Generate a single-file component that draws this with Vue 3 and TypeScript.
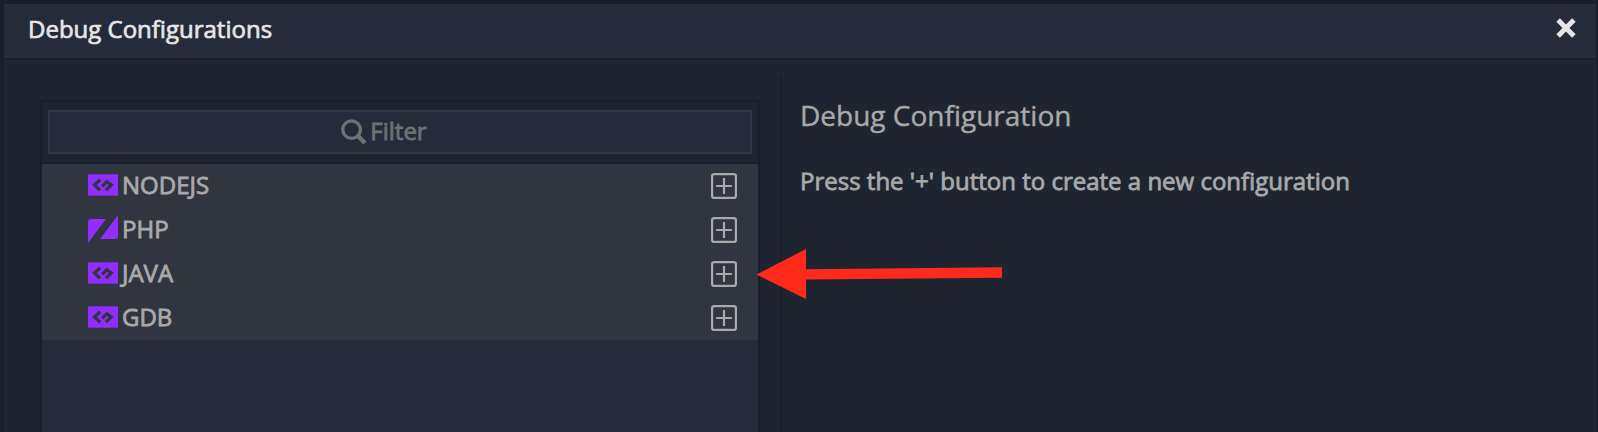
<script setup lang="ts">
interface DebugType { name: string; icon: 'code' | 'php' }

const debugTypes: DebugType[] = [
  { name: 'NODEJS', icon: 'code' },
  { name: 'PHP', icon: 'php' },
  { name: 'JAVA', icon: 'code' },
  { name: 'GDB', icon: 'code' },
]
</script>

<template>
  <div class="dialog">
    <header class="header">
      <span class="title">Debug Configurations</span>
      <svg class="close" width="20" height="20" viewBox="0 0 20 20">
        <path d="M2.1 2.1 17.9 17.9M17.9 2.1 2.1 17.9" stroke="#e6e6e6" stroke-width="5" />
      </svg>
    </header>
    <main class="content">
      <section class="types">
        <div class="filter-bar">
          <div class="filter">
            <svg width="26" height="26" viewBox="0 0 26 26" fill="none" stroke="#6f7271">
              <circle cx="10.6" cy="10.6" r="8.8" stroke-width="3.3" />
              <path d="M16.5 16.5 24 24" stroke-width="4.4" />
            </svg>
            <span class="placeholder">Filter</span>
          </div>
        </div>
        <ul class="list">
          <li v-for="item in debugTypes" :key="item.name" class="row">
            <svg v-if="item.icon === 'code'" class="icon" width="30" height="28" viewBox="0 0 30 28">
              <path d="M0 3.3H30V24.7H0Z" fill="#912dff" />
              <path d="M12.2 8.8 6.5 14 12.2 19.2M14.2 15.4 18.8 10.6 23.3 14 17.8 19.2" fill="none" stroke="#31353f" stroke-width="3.2" />
            </svg>
            <svg v-else class="icon" width="30" height="28" viewBox="0 0 30 28">
              <path d="M0 28V7Q0 4 3 4H18ZM30 0V21Q30 24 27 24H12Z" fill="#912dff" />
            </svg>
            <span class="name">{{ item.name }}</span>
            <svg class="add" width="26" height="26" viewBox="0 0 26 26" fill="none" stroke="#a9a9a9" stroke-width="2.2">
              <rect x="1.1" y="1.1" width="23.8" height="23.8" rx="2" />
              <path d="M13 5V21M5 13H21" />
            </svg>
          </li>
        </ul>
      </section>
      <section class="details">
        <h1 class="heading">Debug Configuration</h1>
        <p class="hint">Press the '+' button to create a new configuration</p>
      </section>
    </main>
    <svg class="arrow" width="248" height="52" viewBox="0 0 248 52">
      <path d="M.5 26.5 50 1V21.2L246 19.3V29.7L50 31.6V51Z" fill="#ff2a1c" />
    </svg>
  </div>
</template>

<style>
body { margin: 0; overflow: hidden; background: #181b26; }
</style>

<style scoped>
.dialog {
  position: relative;
  box-sizing: border-box;
  width: 1598px;
  height: 432px;
  overflow: hidden;
  display: flex;
  flex-direction: column;
  border: solid #1a1e2a;
  border-width: 4px 2px 0 4px;
  background: #1f2530;
  color: #a9a9a9;
  font-family: "Open Sans", sans-serif;
  font-size: 24px;
}
.header {
  box-sizing: border-box;
  height: 56px;
  flex: none;
  display: flex;
  align-items: center;
  justify-content: space-between;
  padding: 0 20px 6px 24px;
  border-bottom: 2px solid #1a1e2a;
  background: #262b3a;
}
.title { color: #e6e6e6; -webkit-text-stroke: 0.7px #e6e6e6; }
.close { display: block; }
.content { flex: 1; display: flex; align-items: stretch; }
.types {
  box-sizing: border-box;
  width: 720px;
  margin: 40px 20px 0 36px;
  border: solid #1a1e2a;
  border-width: 2px 2px 0;
  background: #262b3a;
}
.filter-bar {
  box-sizing: border-box;
  height: 62px;
  padding: 8px 6px;
  border-bottom: 2px solid #1a1e2a;
  background: #1f2530;
}
.filter {
  box-sizing: border-box;
  height: 44px;
  display: flex;
  align-items: center;
  justify-content: center;
  gap: 3px;
  padding-right: 32px;
  border: 2px solid #303646;
  background: #262b3a;
  color: #6f7271;
}
.placeholder { margin-top: -4px; -webkit-text-stroke: 0.8px currentColor; }
.list { margin: 0; padding: 0; list-style: none; background: #31353f; }
.row { height: 44px; display: flex; align-items: center; padding: 0 21px 0 46px; }
.icon { margin: -2px 4px 0 0; }
.name { margin-top: -4px; -webkit-text-stroke: 0.8px currentColor; }
.add { margin-left: auto; }
.details {
  flex: 1;
  margin-top: 16px;
  padding: 17px 0 0 18px;
  border-left: 2px solid #1a1e2a;
}
.heading { margin: 0; font-size: 28px; line-height: 44px; font-weight: 400; -webkit-text-stroke: 0.4px currentColor; }
.hint { margin: 27px 0 0; line-height: 34px; -webkit-text-stroke: 0.8px currentColor; }
.arrow { position: absolute; left: 752px; top: 244px; }
</style>
